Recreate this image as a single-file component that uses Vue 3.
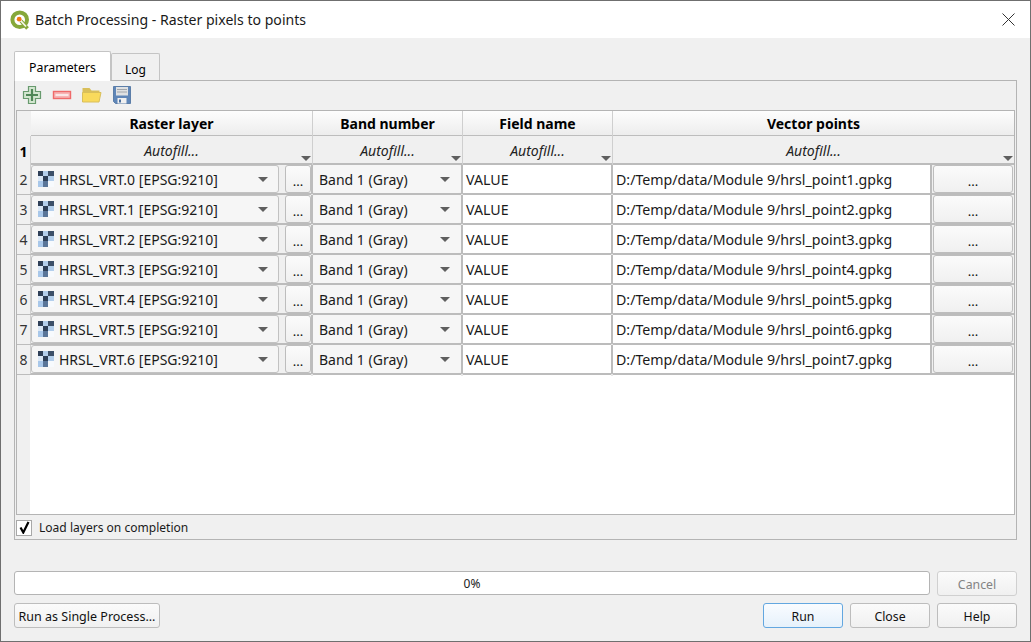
<template>
  <div class="window">
    <div class="titlebar">
      <svg class="logo" width="20" height="20" viewBox="0 0 20 20">
        <circle cx="9.700" cy="9.700" r="7.300" fill="none" stroke="#86a83a" stroke-width="4" />
        <path d="M11 11l6.500 7.500" stroke="#86a83a" stroke-width="3.600" fill="none" />
        <path d="M10.500 10.500l5.500 6" stroke="#f6f6ea" stroke-width="1.800" fill="none" />
        <circle cx="9.200" cy="9.200" r="2.400" fill="#ee7913" />
      </svg>
      <span class="title">Batch Processing - Raster pixels to points</span>
      <svg class="close-x" width="13" height="13" viewBox="0 0 13 13">
        <path d="M.5.5l12 12M12.5.5l-12 12" stroke="#333" stroke-width="1" fill="none" />
      </svg>
    </div>

    <div class="body">
      <div class="tabs">
        <div class="tab active">Parameters</div>
        <div class="tab">Log</div>
      </div>

      <div class="pane">
        <div class="toolbar">
          <svg width="20" height="20" viewBox="0 0 20 20">
            <path d="M6.500 1.500h7v5h5v7h-5v5h-7v-5h-5v-7h5z" fill="#d3e6d0" stroke="#689a6e" stroke-width="1.200" />
            <path d="M10 4v12M4 10h12" stroke="#4f8757" stroke-width="2.200" fill="none" />
          </svg>
          <svg width="20" height="20" viewBox="0 0 20 20">
            <rect x="1.500" y="6.500" width="17" height="7" fill="#f7b4b4" stroke="#ef6a6a" stroke-width="1.400" />
            <rect x="3.500" y="9" width="13" height="2" fill="#fbe6e6" />
          </svg>
          <svg width="20" height="20" viewBox="0 0 20 20">
            <path d="M.5 3h7l2 2.500h8v3H.5z" fill="#d9bf5a" />
            <path d="M.5 17V7.500h18.500l-2 9.500z" fill="#f9da5c" stroke="#d9bf5a" stroke-width="1" />
          </svg>
          <svg width="20" height="20" viewBox="0 0 20 20">
            <path d="M1.500 1.500h17v17h-15l-2-2z" fill="#5f86b8" stroke="#5c7ea8" stroke-width="1" />
            <rect x="4" y="2" width="12" height="8.500" fill="#dfe1e3" />
            <path d="M5 4.500h10M5 7h10" stroke="#a2a6ab" stroke-width="1" />
            <rect x="5.500" y="13" width="9" height="5.500" fill="#f0f0f0" />
            <rect x="7" y="14.500" width="2" height="3" fill="#4a6f9e" />
          </svg>
        </div>

        <div class="table">
          <div class="table-head">
            <div class="corner"></div>
            <div v-for="col in columns" :key="col" class="head-cell">{{ col }}</div>
          </div>

          <div class="row autofill-row">
            <div class="row-num bold">1</div>
            <div v-for="col in columns" :key="col" class="autofill">
              <span>Autofill...</span>
              <i class="caret"></i>
            </div>
          </div>

          <div v-for="(row, i) in rows" :key="row.layer" class="row">
            <div class="row-num">{{ i + 2 }}</div>
            <div class="cell layer-cell">
              <div class="combo">
                <svg class="raster" width="16" height="16" viewBox="0 0 16 16">
                  <rect width="16" height="16" fill="#f7fafd" />
                  <rect x="0" y="0" width="5" height="5" fill="#2f4058" />
                  <rect x="5" y="0" width="5" height="5" fill="#b4cfec" />
                  <rect x="10" y="0" width="6" height="5" fill="#3d5069" />
                  <rect x="0" y="5" width="5" height="5" fill="#dbe8f6" />
                  <rect x="5" y="5" width="5" height="5" fill="#2f4058" />
                  <rect x="10" y="5" width="6" height="5" fill="#b4cfec" />
                  <rect x="0" y="10" width="5" height="6" fill="#a9c8ea" />
                  <rect x="5" y="10" width="5" height="6" fill="#5a7699" />
                </svg>
                <span class="combo-text">{{ row.layer }} [EPSG:9210]</span>
                <i class="caret"></i>
              </div>
              <div class="btn dots">...</div>
            </div>
            <div class="cell">
              <div class="combo band">
                <span class="combo-text">Band 1 (Gray)</span>
                <i class="caret"></i>
              </div>
            </div>
            <div class="cell">
              <div class="edit">VALUE</div>
            </div>
            <div class="cell path-cell">
              <div class="edit">{{ row.path }}</div>
              <div class="btn dots wide">...</div>
            </div>
          </div>

          <div class="table-rest"><div class="rest-gutter"></div></div>
        </div>

        <label class="load">
          <span class="checkbox">
            <svg width="13" height="13" viewBox="0 0 13 13">
              <path d="M2.500 6.500l2.800 5L10.500 1" stroke="#000" stroke-width="2.200" fill="none" />
            </svg>
          </span>
          Load layers on completion
        </label>
      </div>

      <div class="progress-row">
        <div class="progress">0%</div>
        <div class="btn action disabled">Cancel</div>
      </div>

      <div class="button-row">
        <div class="btn single">Run as Single Process...</div>
        <div class="spacer"></div>
        <div class="btn action default">Run</div>
        <div class="btn action">Close</div>
        <div class="btn action">Help</div>
      </div>
    </div>
  </div>
</template>

<script setup>
const columns = ['Raster layer', 'Band number', 'Field name', 'Vector points']

const rows = [0, 1, 2, 3, 4, 5, 6].map((n) => ({
  layer: `HRSL_VRT.${n}`,
  path: `D:/Temp/data/Module 9/hrsl_point${n + 1}.gpkg`
}))
</script>

<style>
html,
body {
  margin: 0;
  background: #f0f0f0;
}
</style>

<style scoped>
.window {
  width: 1031px;
  height: 642px;
  box-sizing: border-box;
  border: 1px solid #6f6f6f;
  background: #f0f0f0;
  display: flex;
  flex-direction: column;
  font-family: "Noto Sans", "Open Sans", sans-serif;
  font-size: 13px;
  color: #000;
  overflow: hidden;
}

/* title bar */
.titlebar {
  height: 37px;
  background: #fff;
  display: flex;
  align-items: center;
  padding: 0 15px 0 9px;
  flex: none;
}

.logo {
  margin-right: 5px;
}

.title {
  font-size: 14.1px;
  color: #1a1a1a;
  flex: 1;
}

/* tabs */
.body {
  flex: 1;
  display: flex;
  flex-direction: column;
  padding: 13px 13px 0;
  min-height: 0;
}

.tabs {
  display: flex;
  align-items: flex-end;
  height: 29px;
  flex: none;
  position: relative;
  z-index: 1;
}

.tab {
  box-sizing: border-box;
  width: 49px;
  height: 27px;
  border: 1px solid #c4c4c4;
  border-bottom: 0;
  border-radius: 2px 2px 0 0;
  background: #f0f0f0;
  font-size: 12px;
  display: flex;
  align-items: center;
  justify-content: center;
  padding-top: 4px;
}

.tab.active {
  width: 97px;
  height: 30px;
  margin-bottom: -1px;
  background: #fff;
  font-size: 12.3px;
  padding-top: 2px;
}

.pane {
  box-sizing: border-box;
  height: 460px;
  border: 1px solid #b4b4b4;
  padding: 0 1px;
  flex: none;
  display: flex;
  flex-direction: column;
}

.toolbar {
  box-sizing: border-box;
  height: 29px;
  flex: none;
  display: flex;
  align-items: center;
  gap: 10px;
  padding: 0 0 1px 6px;
}

/* table */
.table {
  flex: 1;
  min-height: 0;
  border: 1px solid #b4b4b4;
  background: #fff;
  display: flex;
  flex-direction: column;
}

.table-head,
.row {
  display: grid;
  grid-template-columns: 14px 282px 150px 150px 401px;
  flex: none;
}

.table-head {
  height: 24px;
  background: linear-gradient(#fdfdfd, #ededed);
  border-bottom: 1px solid #bdbdbd;
}

.corner {
  background: #f0f0f0;
}

.head-cell {
  border-right: 1px solid #cfcfcf;
  font-weight: 700;
  font-size: 14px;
  line-height: 25px;
  text-align: center;
  box-sizing: border-box;
}

.head-cell:last-child {
  border-right: 0;
}

.row {
  height: 30px;
  background: #f0f0f0;
  box-sizing: border-box;
  border-bottom: 2px solid #bcbcbc;
}

.autofill-row {
  height: 29px;
}

.row-num {
  background: #f0f0f0;
  border-right: 1px solid #d0d0d0;
  font-size: 14px;
  line-height: 29px;
  text-align: center;
  box-sizing: border-box;
  color: #333;
}

.row-num.bold {
  font-weight: 700;
  color: #000;
  line-height: 31px;
}

.autofill {
  position: relative;
  border-right: 1px solid #cfcfcf;
  font-style: italic;
  font-size: 14px;
  line-height: 29px;
  text-align: center;
  box-sizing: border-box;
  color: #222;
}

.autofill:last-child {
  border-right: 0;
}

.autofill .caret {
  position: absolute;
  right: 1px;
  bottom: 6px;
}

.cell {
  display: flex;
  position: relative;
  box-sizing: border-box;
  border-right: 2px solid #bcbcbc;
  min-width: 0;
}

/* the lighter dot where two grid lines cross */
.cell::after {
  content: "";
  position: absolute;
  right: -2px;
  bottom: -2px;
  width: 2px;
  height: 2px;
  background: #e6e6e6;
}

.cell:last-child {
  border-right: 0;
}

.cell:last-child::after {
  display: none;
}

.layer-cell {
  gap: 6px;
}

.combo {
  box-sizing: border-box;
  flex: 1;
  height: 28px;
  border: 1px solid #c2c2c2;
  border-radius: 3px;
  background: #f6f6f6;
  display: flex;
  align-items: center;
  padding: 0 10px 0 6px;
  font-size: 14px;
  color: #1a1a1a;
  min-width: 0;
}

.combo.band {
  border: 0;
  padding-left: 6px;
  padding-right: 11px;
}

.raster {
  margin-right: 5px;
  flex: none;
}

.combo-text {
  flex: 1;
  white-space: nowrap;
}

.caret {
  display: inline-block;
  width: 0;
  height: 0;
  border-left: 5px solid transparent;
  border-right: 5px solid transparent;
  border-top: 5px solid #5f5f5f;
}

.edit {
  flex: 1;
  background: #fff;
  font-size: 14.2px;
  line-height: 29px;
  height: 28px;
  padding-left: 3px;
  white-space: nowrap;
  color: #1a1a1a;
}

.path-cell {
  gap: 1px;
}

.path-cell .edit {
  border-right: 2px solid #bcbcbc;
}

/* buttons */
.btn {
  box-sizing: border-box;
  border: 1px solid #bdbdbd;
  border-radius: 3px;
  background: linear-gradient(#fbfbfb, #f0f0f0);
  display: flex;
  align-items: center;
  justify-content: center;
  font-size: 12.3px;
  color: #111;
  padding-top: 1px;
}

.dots {
  width: 26px;
  height: 28px;
  flex: none;
  padding-top: 3px;
  font-size: 13px;
}

.dots.wide {
  width: 80px;
  margin-right: 1px;
}

.table-rest {
  flex: 1;
  min-height: 0;
  display: flex;
}

.rest-gutter {
  width: 13px;
  background: #f0f0f0;
}

/* checkbox row */
.load {
  height: 24px;
  flex: none;
  display: flex;
  align-items: center;
  font-size: 12.05px;
  color: #1a1a1a;
  padding-top: 1px;
  box-sizing: border-box;
}

.checkbox {
  box-sizing: border-box;
  width: 16px;
  height: 16px;
  margin-right: 7px;
  border: 1px solid #a8a8a8;
  background: #fff;
  display: flex;
  align-items: center;
  justify-content: center;
}

/* bottom */
.progress-row {
  display: flex;
  gap: 7px;
  margin-top: 31px;
  flex: none;
}

.progress {
  box-sizing: border-box;
  width: 916px;
  height: 24px;
  border: 1px solid #b4b4b4;
  border-radius: 3px;
  background: #fff;
  text-align: center;
  font-size: 12px;
  line-height: 23px;
  color: #222;
}

.button-row {
  display: flex;
  gap: 7px;
  margin-top: 7px;
  flex: none;
}

.spacer {
  flex: 1;
}

.action {
  width: 80px;
  height: 25px;
}

.single {
  width: 146px;
  height: 25px;
  font-size: 12.5px;
}

.disabled {
  color: #838383;
  border-color: #d0d0d0;
}

.default {
  border-color: #63a7e0;
  background: linear-gradient(#f9fcff, #e6f1fb);
}
</style>
